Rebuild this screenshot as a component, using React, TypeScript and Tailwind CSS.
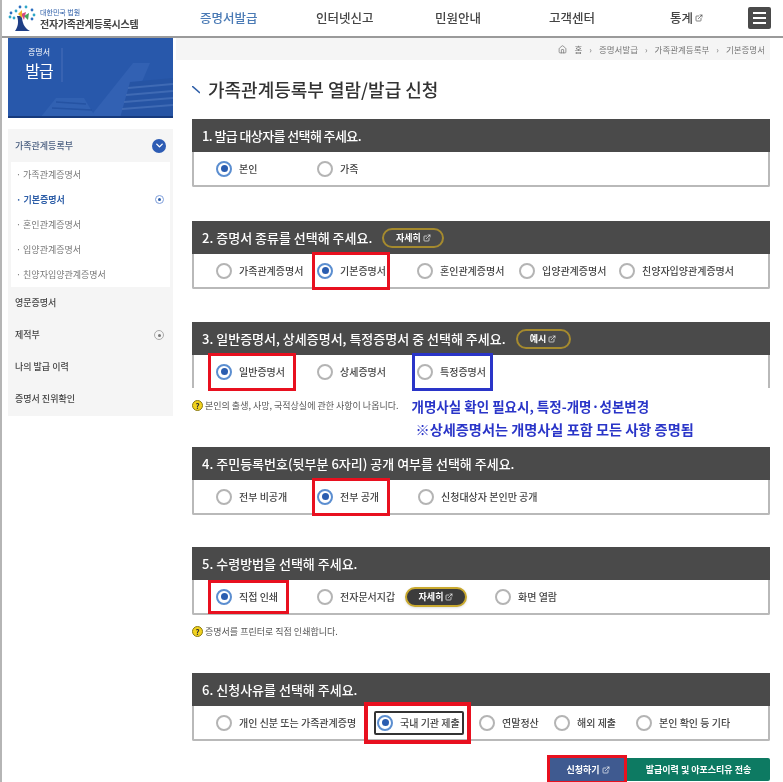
import React from 'react';
import { ChevronDown, House, ExternalLink } from 'lucide-react';

const font = "font-['Noto_Sans_CJK_KR','Noto_Sans',sans-serif]";

function Radio({ checked }: { checked?: boolean }) {
  return (
    <span
      className={`flex h-[16px] w-[16px] shrink-0 items-center justify-center rounded-full border-2 bg-white ${
        checked ? 'border-[#5b8ed0]' : 'border-[#b4b4b4]'
      }`}
    >
      {checked && <span className="h-[7px] w-[7px] rounded-full bg-[#2a5db0]" />}
    </span>
  );
}

interface Opt {
  label: string;
  width: string;
  checked?: boolean;
  mark?: string;
}

function Option({ opt }: { opt: Opt }) {
  return (
    <div className={`relative flex h-[16px] shrink-0 items-center gap-[7px] ${opt.width}`}>
      <Radio checked={opt.checked} />
      <span className="whitespace-nowrap text-[10px] font-medium text-[#444]">{opt.label}</span>
      {opt.mark && <span className={`absolute ${opt.mark}`} />}
    </div>
  );
}

function SmallLink({ label, width }: { label: string; width: string }) {
  return (
    <span
      className={`ml-[10px] flex h-[20px] items-center justify-center gap-[2px] rounded-full border-2 border-[#a58a2e] bg-[#4a4a4a] text-[9px] font-bold text-white ${width}`}
    >
      {label}
      <ExternalLink className="h-[8px] w-[8px]" />
    </span>
  );
}

function Section({
  title,
  extra,
  children,
  open,
}: {
  title: React.ReactNode;
  extra?: React.ReactNode;
  children: React.ReactNode;
  open?: boolean;
}) {
  return (
    <section
      className={`border-x-2 border-[#b9b9b9] ${open ? '' : 'border-b-2 rounded-b-[2px]'}`}
    >
      <div className="-mx-[2px] flex h-[33px] items-center bg-[#4a4a4a] pl-[10px] text-[13px] font-medium text-white">
        <span>{title}</span>
        {extra}
      </div>
      <div className="flex h-[33px] items-center pl-[22px]">{children}</div>
    </section>
  );
}

function Hint({ text }: { text: string }) {
  return (
    <div className="flex items-center gap-[2px] whitespace-nowrap text-[9px] text-[#555]">
      <span className="flex h-[11px] w-[11px] items-center justify-center rounded-full border border-[#8a7a10] bg-[#f2d21f] text-[8px] font-bold leading-none text-[#333]">
        ?
      </span>
      {text}
    </div>
  );
}

function Logo() {
  return (
    <svg width="28" height="28" viewBox="0 0 28 28" className="shrink-0">
      <path d="M9 12 C11 18 10 23 7 27 L22 27 C16 24 14 18 14 12 Z" fill="#1f3f86" />
      <path d="M13 10 L18 8 L16 16 Z" fill="#d8477e" />
      <path d="M10 10 L14 6 L14 14 Z" fill="#f0b32a" />
      <path d="M16 12 L21 9 L20 16 Z" fill="#43a35c" />
      {[
        [2, 13],
        [3, 9],
        [8, 7],
        [12, 3],
        [18, 3],
        [24, 6],
        [26, 11],
        [24, 15],
        [6, 14],
      ].map(([cx, cy], i) => (
        <circle key={i} cx={cx} cy={cy} r="1.4" fill={i % 2 ? '#2d6fc0' : '#2fa7c8'} />
      ))}
    </svg>
  );
}

function Banner() {
  return (
    <div className="relative h-[80px] overflow-hidden bg-[#2858ab]">
      <svg viewBox="0 0 165 80" className="absolute inset-0 h-full w-full">
        <path d="M82 79 L125 25 L142 25 L119 79 Z" fill="#3261b3" />
        <path d="M122 44 L165 40 L165 80 L112 80 Z" fill="#2654a4" />
        <path d="M120 50 L165 46 M118 57 L165 53 M116 64 L165 60 M114 71 L165 67" stroke="#3f6ab4" strokeWidth="1.8" />
        <path d="M32 80 L48 60 L76 60 L88 80 Z" fill="#3161b2" />
        <path d="M48 64 L78 66 M44 70 L84 72" stroke="#2553a3" strokeWidth="1.5" />
        <path d="M0 78 L165 78 L165 80 L0 80 Z" fill="#163a7d" />
        <path d="M54 10 L54 44" stroke="#5f82c2" strokeWidth="0.6" />
      </svg>
      <div className="relative flex w-[54px] flex-col items-center gap-[2px] pl-[8px] pt-[8px] text-white">
        <span className="text-[8px] leading-[11px]">증명서</span>
        <span className="text-[16px] leading-[22px] tracking-[-1px]">발급</span>
      </div>
    </div>
  );
}

const subMenu = ['가족관계증명서', '기본증명서', '혼인관계증명서', '입양관계증명서', '친양자입양관계증명서'];

function Sidebar() {
  return (
    <aside className="w-[165px] shrink-0">
      <Banner />
      <div className="mt-[11px] bg-[#f5f5f5] pb-[1px]">
        <div className="flex h-[33px] items-center justify-between pl-[7px] pr-[7px] text-[9px] font-medium text-[#4a5f80]">
          가족관계등록부
          <span className="flex h-[14px] w-[14px] items-center justify-center rounded-full bg-[#2d5cb4]">
            <ChevronDown className="h-[11px] w-[11px] text-white" strokeWidth={3} />
          </span>
        </div>
        <ul className="mx-[3px] flex h-[125px] flex-col justify-center gap-[9px] bg-white pl-[5px] pr-[6px] text-[9px] text-[#777]">
          {subMenu.map(item => (
            <li
              key={item}
              className={`flex h-[16px] items-center justify-between ${
                item === '기본증명서' ? 'font-bold text-[#2f5fa8]' : ''
              }`}
            >
              <span>· {item}</span>
              {item === '기본증명서' && (
                <span className="flex h-[9px] w-[9px] items-center justify-center rounded-full border border-[#7f9fdc]">
                  <span className="h-[3px] w-[3px] rounded-full bg-[#2f5fa8]" />
                </span>
              )}
            </li>
          ))}
        </ul>
        {['영문증명서', '제적부', '나의 발급 이력', '증명서 진위확인'].map(item => (
          <div
            key={item}
            className="flex h-[32px] items-center justify-between pl-[7px] pr-[9px] text-[9px] font-medium text-[#444]"
          >
            {item}
            {item === '제적부' && (
              <span className="flex h-[10px] w-[10px] items-center justify-center rounded-full border border-[#aaa]">
                <span className="h-[3px] w-[3px] rounded-full bg-[#777]" />
              </span>
            )}
          </div>
        ))}
      </div>
    </aside>
  );
}

const red = '-inset-y-[11px] border-[3px] border-[#e8101f]';

export default function App() {
  return (
    <div className={`${font} h-[782px] w-[783px] overflow-hidden border-l-2 border-[#b5b5b5] bg-white blur-[0.35px]`}>
      <header className="flex h-[38px] items-center border-b-2 border-[#9a9a9a] pl-[6px] pr-[12px]">
        <Logo />
        <div className="ml-[4px] w-[101px]">
          <div className="text-[7px] leading-[10px] text-[#2f5fa8]">대한민국 법원</div>
          <div className="whitespace-nowrap text-[10px] font-bold leading-[13px] tracking-[-0.25px] text-[#444]">전자가족관계등록시스템</div>
        </div>
        <nav className="ml-[59px] flex flex-1 items-center text-[12.5px] font-medium text-[#444]">
          <span className="w-[116px] text-[#4a7ab5]">증명서발급</span>
          <span className="w-[119px]">인터넷신고</span>
          <span className="w-[114px]">민원안내</span>
          <span className="w-[121px]">고객센터</span>
          <span className="flex items-center gap-[2px]">
            통계 <ExternalLink className="h-[8px] w-[8px]" />
          </span>
        </nav>
        <span className="flex h-[22px] w-[23px] flex-col items-center justify-center gap-[3px] rounded-[2px] bg-[#4a4a4a]">
          <span className="h-[2px] w-[13px] bg-white" />
          <span className="h-[2px] w-[13px] bg-white" />
          <span className="h-[2px] w-[13px] bg-white" />
        </span>
      </header>

      <div className="flex pl-[6px]">
        <Sidebar />
        <main className="ml-[3px] w-[594px]">
          <div className="flex h-[22px] items-center justify-end gap-[7px] bg-[#f5f5f5] pr-[5px] text-[8.5px] text-[#777]">
            <House className="h-[9px] w-[9px]" />
            <span>홈</span>
            <span>›</span>
            <span>증명서발급</span>
            <span>›</span>
            <span>가족관계등록부</span>
            <span>›</span>
            <span>기본증명서</span>
          </div>
          <div className="pl-[16px]">
            <h1 className="flex h-[59px] items-center gap-[8px] text-[18px] font-medium text-[#333]">
              <svg width="8" height="8" viewBox="0 0 8 8">
                <path d="M0 0 L8 7" stroke="#2f5fa8" strokeWidth="1.6" />
              </svg>
              가족관계등록부 열람/발급 신청
            </h1>

            <Section title={<span className="tracking-[-0.6px]">1. 발급 대상자를 선택해 주세요.</span>}>
              <Option opt={{ label: '본인', width: 'w-[101px]', checked: true }} />
              <Option opt={{ label: '가족', width: 'w-[101px]' }} />
            </Section>

            <div className="mt-[34px]">
              <Section
                title="2. 증명서 종류를 선택해 주세요."
                extra={<SmallLink label="자세히" width="w-[62px]" />}
              >
                <Option opt={{ label: '가족관계증명서', width: 'w-[101px]' }} />
                <Option
                  opt={{
                    label: '기본증명서',
                    width: 'w-[100px]',
                    checked: true,
                    mark: `${red} -left-[5px] w-[78px]`,
                  }}
                />
                <Option opt={{ label: '혼인관계증명서', width: 'w-[102px]' }} />
                <Option opt={{ label: '입양관계증명서', width: 'w-[100px]' }} />
                <Option opt={{ label: '친양자입양관계증명서', width: 'w-[130px]' }} />
              </Section>
            </div>

            <div className="mt-[33px]">
              <Section
                open
                title="3. 일반증명서, 상세증명서, 특정증명서 중 선택해 주세요."
                extra={<SmallLink label="예시" width="w-[55px]" />}
              >
                <Option
                  opt={{
                    label: '일반증명서',
                    width: 'w-[101px]',
                    checked: true,
                    mark: `${red} -left-[8px] w-[88px]`,
                  }}
                />
                <Option opt={{ label: '상세증명서', width: 'w-[100px]' }} />
                <Option
                  opt={{
                    label: '특정증명서',
                    width: 'w-[100px]',
                    mark: '-inset-y-[11px] -left-[5px] w-[81px] border-[3px] border-[#2a35c8]',
                  }}
                />
              </Section>
            </div>

            <div className="flex h-[59px] items-start pt-[11px]">
              <Hint text="본인의 출생, 사망, 국적상실에 관한 사항이 나옵니다." />
              <div className="ml-[13px] -mt-[4px] font-bold leading-[23px] text-[#2a35c8]">
                <div className="whitespace-nowrap text-[13.5px]">개명사실 확인 필요시, 특정-개명·성본변경</div>
                <div className="whitespace-nowrap pl-[4px] text-[14.2px]">※상세증명서는 개명사실 포함 모든 사항 증명됨</div>
              </div>
            </div>

            <Section title="4. 주민등록번호(뒷부분 6자리) 공개 여부를 선택해 주세요.">
              <Option opt={{ label: '전부 비공개', width: 'w-[101px]' }} />
              <Option
                opt={{
                  label: '전부 공개',
                  width: 'w-[101px]',
                  checked: true,
                  mark: `${red} -left-[5px] w-[78px]`,
                }}
              />
              <Option opt={{ label: '신청대상자 본인만 공개', width: 'w-[150px]' }} />
            </Section>

            <div className="mt-[32px]">
              <Section title="5. 수령방법을 선택해 주세요.">
                <Option
                  opt={{
                    label: '직접 인쇄',
                    width: 'w-[101px]',
                    checked: true,
                    mark: '-inset-y-[9px] -left-[8px] w-[81px] border-[3px] border-[#e8101f]',
                  }}
                />
                <Option opt={{ label: '전자문서지갑', width: 'w-[88px]' }} />
                <span className="flex h-[20px] w-[62px] items-center justify-center gap-[2px] rounded-full border-2 border-[#c9a92e] bg-[#3c3c3c] text-[9px] font-bold text-white shadow">
                  자세히 <ExternalLink className="h-[8px] w-[8px]" />
                </span>
                <div className="ml-[28px]">
                  <Option opt={{ label: '화면 열람', width: 'w-[90px]' }} />
                </div>
              </Section>
            </div>

            <div className="mt-[10px] h-[48px]">
              <Hint text="증명서를 프린터로 직접 인쇄합니다." />
            </div>

            <Section title="6. 신청사유를 선택해 주세요.">
              <Option opt={{ label: '개인 신분 또는 가족관계증명', width: 'w-[161px]' }} />
              <div className="relative w-[102px]">
                <span className="absolute -inset-y-[13px] -left-[13px] w-[107px] border-[4px] border-[#e8101f]" />
                <span className="absolute -inset-y-[4px] -left-[3px] w-[90px] rounded-[2px] border-2 border-[#333]" />
                <Option opt={{ label: '국내 기관 제출', width: 'w-[100px]', checked: true }} />
              </div>
              <Option opt={{ label: '연말정산', width: 'w-[75px]' }} />
              <Option opt={{ label: '해외 제출', width: 'w-[82px]' }} />
              <Option opt={{ label: '본인 확인 등 기타', width: 'w-[110px]' }} />
            </Section>

            <div className="mt-[17px] flex justify-end">
              <span className="relative flex h-[23px] w-[78px] items-center justify-center gap-[2px] bg-[#3f5a90] text-[9px] font-bold text-white">
                신청하기 <ExternalLink className="h-[8px] w-[8px]" />
                <span className="absolute -inset-y-[3px] -left-[2px] right-0 border-[3px] border-[#e8101f]" />
              </span>
              <span className="flex h-[23px] w-[143px] items-center justify-center rounded-r-[2px] bg-[#0d7a62] text-[9px] font-bold text-white">
                발급이력 및 아포스티유 전송
              </span>
            </div>
          </div>
        </main>
      </div>
    </div>
  );
}
